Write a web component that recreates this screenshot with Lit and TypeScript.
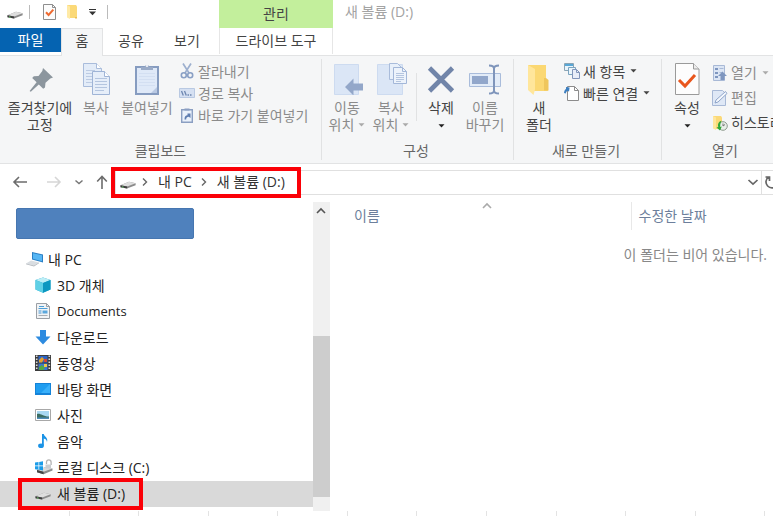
import { LitElement, html, css, svg, nothing } from "lit";
import type { TemplateResult } from "lit";
import { customElement } from "lit/decorators.js";
import { classMap } from "lit/directives/class-map.js";

const icon = (w: number, h: number, body: unknown) =>
  html`<svg width=${w} height=${h} viewBox="0 0 ${w} ${h}" fill="none" aria-hidden="true">${body}</svg>`;

const caret = html`<svg class="caret" width="7" height="4" viewBox="0 0 7 4" aria-hidden="true"><path d="M0.5 0.3h6L3.5 3.6z" fill="currentColor" /></svg>`;

const icons = {
  drive: () => icon(16, 10, svg`
    <path d="M0.5 6.200 9 2.800l6.600 1.400v2L7 9.600 0.500 8.200z" fill="#8b8b8b"/>
    <path d="M0.5 6.200 9 2.800l6.600 1.400L7.200 7.600z" fill="#dedede"/>
    <path d="M0.5 6.200 7.200 7.600v2L0.500 8.300z" fill="#3f3f3f"/>
    <path d="M2 7.900l1.600.3" stroke="#6fd36f"/>`),
  check: () => icon(13, 16, svg`
    <path d="M.5.5h9l3 3v12H.5z" fill="#fcfcfc" stroke="#8e8e8e"/><path d="M9.5.5v3h3" stroke="#8e8e8e"/>
    <path d="M3 8.2l2.6 2.8L10.3 5.6" stroke="#ee6a30" stroke-width="2"/>`),
  folderSmall: () => icon(12, 16, svg`
    <path d="M1 1h9l1 1.5V14H3z" fill="#fbd978"/><path d="M1 1l3 1.5V15L1 13.5z" fill="#ffeaa6"/><path d="M9 13h2v1.5H9z" fill="#e9bf57"/>`),
  customize: () => icon(9, 8, svg`<path d="M1 1.5h7" stroke="#333"/><path d="M1 3.6h7L4.5 7.2z" fill="#333"/>`),
  pin: () => icon(32, 32, svg`
    <path d="M19 5 29 14.500 26.300 15.600 21.500 19.800 21 24.500 19.200 25.800 14.800 21.500 6.800 28.800 5.600 28 12.600 19.300 8.200 15 9.800 13.200 14.500 13 18.300 8z" fill="#8c969e"/>`),
  copy: () => icon(32, 32, svg`
    <path d="M3.500.5h13l5 5v18h-18z" fill="#e3ecf8" stroke="#a9bcdb"/><path d="M16.500.5v5h5" fill="#fff" stroke="#a9bcdb"/>
    <path d="M6 7.500h9M6 10.500h9M6 13.500h9M6 16.500h9M6 19.500h9" stroke="#bccbe3"/>
    <path d="M12.500 8.500h12l5 5v18h-17z" fill="#e6eef9" stroke="#9fb4d6"/><path d="M24.500 8.500v5h5" fill="#fff" stroke="#9fb4d6"/>
    <path d="M15 15.500h12M15 18.500h12M15 21.500h12M15 24.500h12M15 27.500h9" stroke="#b4c5df"/>`),
  paste: () => icon(32, 32, svg`
    <path d="M5 4h22v27H5z" fill="#dfe9f8" stroke="#869cc0" stroke-width="2"/>
    <path d="M8 10.500h16M8 13.500h16M8 16.500h16M8 19.500h16M8 22.500h16" stroke="#d3dff2"/>
    <path d="M10 7V4h3.500a2.600 2.600 0 0 1 5 0H22v3z" fill="#9aabc7"/><circle cx="16" cy="3" r="1" fill="#fff"/><path d="M20 30l6-6v6z" fill="#b9c9e3"/>`),
  cut: () => icon(16, 16, svg`
    <path d="M4 .5 10 10M12 .5 6 10" stroke="#9db0cf" stroke-width="1.700"/>
    <circle cx="4.800" cy="12.300" r="2.500" stroke="#8aa0c5" stroke-width="1.600"/><circle cx="11.200" cy="12.300" r="2.500" stroke="#8aa0c5" stroke-width="1.600"/>`),
  path: () => icon(16, 16, svg`
    <path d="M.5 3.500h15v9H.5z" fill="#d5e0f2" stroke="#b9c9e2"/><path d="M2.500 6l1.800 4.500M5.500 6l1.800 4.500M8.500 10h1.500M11 10h1.500" stroke="#6d86b0" stroke-width="1.300"/>`),
  shortcut: () => icon(16, 16, svg`
    <path d="M2.700 2.700h10.600v12.600H2.700z" fill="#eaf1fb" stroke="#8b9fc2" stroke-width="1.400"/><path d="M5.500 3.500v-2h5v2z" fill="#8b9fc2"/>
    <path d="M5.500 12.500c0-3 1-4 3-4.200V6.500l3 0v4.500L9.800 9.800c-1.800.3-2.600 1-2.600 2.700z" fill="#5f7db0"/>`),
  moveTo: () => icon(32, 32, svg`
    <path d="M3.500 1.500h24v30h-24z" fill="#dbe6f6" stroke="#cddbf0"/><path d="M14 24l8.500-8.500v5H32v7h-9.500v5z" fill="#93a7c9"/>`),
  copyTo: () => icon(32, 32, svg`
    <path d="M2.500 1.500h25v30h-25z" fill="#dbe6f6" stroke="#cddbf0"/>
    <path d="M14.500.5h8l4 4v12h-12z" fill="#e8f0fa" stroke="#a9bcdb"/>
    <path d="M18.500 4.500h9l4 4v12h-13z" fill="#edf3fb" stroke="#a3b7d8"/><path d="M27.500 4.500v4h4" stroke="#a3b7d8"/>
    <path d="M21 10.500h8M21 12.500h8M21 14.500h8M21 16.500h8M21 18.500h5" stroke="#b4c5df"/>`),
  remove: () => icon(32, 32, svg`<path d="M4.500 5 27.500 28M27.500 5 4.500 28" stroke="#7185a9" stroke-width="4.600"/>`),
  rename: () => icon(32, 32, svg`
    <path d="M.5 10.500h31v13H.5z" fill="#e3ecf8" stroke="#a9bcdb"/><path d="M3 13h16v8H3z" fill="#92a7cb"/>
    <path d="M25 5v24M20 2.500c3 0 5 1 5 3 0-2 2-3 5-3M20 30.500c3 0 5-1 5-3 0 2 2 3 5 3" stroke="#7f95bb" stroke-width="2"/>`),
  newFolder: () => icon(32, 32, svg`
    <path d="M5 2h18v24l2 1.500V28H9z" fill="#fbd873"/><path d="M21 15h2l2.500 2v10.500H21z" fill="#efc65c"/>
    <path d="M5 2l7 4v20.500l-1.500 5.500L5 27z" fill="#ffe69b"/>`),
  newItem: () => icon(16, 16, svg`
    <path d="M.5.5h9v7h-9z" fill="#e9f4fb" stroke="#8aa4b5"/><path d="M1 1h8v2H1z" fill="#58a7d6"/>
    <path d="M4.500 4.500h7v7h-7z" fill="#eaf5fb" stroke="#7ba4c0"/>
    <path d="M8.500 6.500h4l3 3v6h-7z" fill="#e7edf8" stroke="#8195ba"/><path d="M12.500 6.500v3h3" stroke="#8195ba"/>`),
  easyAccess: () => icon(16, 16, svg`
    <path d="M3.500 1.500h7l4 4v10h-11z" fill="#fff" stroke="#8c8c8c"/><path d="M10.500 1.500v4h4" stroke="#8c8c8c"/>
    <path d="M0 8c.3-2.500 1-3.600 2-4V2l3.600.6L5 6.800 3.800 5.800C2.600 6.300 2 7 1.800 8.500z" fill="#3c7fc1"/>`),
  properties: () => icon(32, 32, svg`
    <path d="M4.500.5h18l5.500 5.500v25.500H4.500z" fill="#fdfdfd" stroke="#9a9a9a"/><path d="M22.500.5V6H28" fill="#ececec" stroke="#9a9a9a"/>
    <path d="M8 17l6 6L24 12" stroke="#e9561d" stroke-width="3"/>`),
  open: () => icon(16, 16, svg`
    <path d="M1.500.5h11v15h-11z" fill="#dbe5f4" stroke="#a8b9d6"/><path d="M3 3h3v2H3zM3 7h3v2H3zM3 11h3v2H3z" fill="#7e96bf"/>
    <path d="M7.500 3.500h4M7.500 7.500h3" stroke="#a8b9d6"/><path d="M10.500 6.500 15 11h-2.500v4h-4v-4H6z" fill="#7e96bf"/>`),
  edit: () => icon(16, 16, svg`
    <path d="M.5.500h10l3 3v12H.5z" fill="#dfe8f6" stroke="#a8b9d6"/><path d="M3 13l1-3L13.500 1.500 15 3.500 6 12z" fill="#f4f7fc" stroke="#8fa5ca"/>`),
  history: () => icon(16, 16, svg`
    <path d="M1 1h8l1 1.500V14H3z" fill="#fbd978"/><path d="M1 1l3 1.500V15L1 13.500z" fill="#ffe69b"/>
    <circle cx="11" cy="11" r="4.300" fill="#e8eee8" stroke="#8d9a8d"/><path d="M11 8.500V11l2-1.500" stroke="#777"/>
    <path d="M9.500 5.500C6 7 5.500 10 6.500 12L4.500 12.500 8 15.500 9.800 11.500 8.300 12C8 9.500 8.500 8 9.500 5.500z" fill="#2ea836"/>`),
  back: () => icon(16, 16, svg`<path d="M15 8H2M7 3 2 8l5 5" stroke="#6c6c6c" stroke-width="1.600"/>`),
  forward: () => icon(16, 16, svg`<path d="M1 8h13M9 3l5 5-5 5" stroke="#d6d6d6" stroke-width="1.600"/>`),
  up: () => icon(12, 16, svg`<path d="M6 15V3M1.200 7.500 6 2.500l4.800 5" stroke="#6c6c6c" stroke-width="1.600"/>`),
  chevronSmall: () => icon(10, 8, svg`<path d="M1.500 2.500 5 5.500l3.500-3" stroke="#777" stroke-width="1.500"/>`),
  chevronDown: () => icon(12, 8, svg`<path d="M1.500 2 6 6.200 10.500 2" stroke="#666" stroke-width="1.700"/>`),
  chevronUp: () => icon(12, 8, svg`<path d="M2 6l4-4 4 4" stroke="currentColor" stroke-width="1.600"/>`),
  chevronRight: () => icon(6, 10, svg`<path d="M1 1.500 4.500 5 1 8.500" stroke="#666" stroke-width="1.400"/>`),
  refresh: () => icon(16, 16, svg`<path d="M4.500 3A6 6 0 1 0 11 2.700M1.500 3h4v4" stroke="#666" stroke-width="1.700"/>`),
  pc: () => icon(18, 16, svg`
    <path d="M6 1l11 2.500v8L6 8.500z" fill="#2b7fc4"/><path d="M7 2.200l9 2.100v5.900L7 7.700z" fill="#56b6f4"/>
    <path d="M0 12.500l5-3 8 2-5 3z" fill="#d9dde1"/><path d="M0 12.500l8 2 5-3v.8L8 15.500 0 13.300z" fill="#b3b8bd"/>`),
  objects: () => icon(16, 16, svg`
    <path d="M8 0.500l7.500 2.500v9.500L8 15.800.5 12.500V3z" fill="#1fa9cf"/><path d="M8 .5 15.500 3 8 6 .5 3z" fill="#bdeef6"/>
    <path d="M.5 3 8 6v9.800L.5 12.500z" fill="#5fd0e6"/><path d="M8 6l7.500-3v9.500L8 15.800z" fill="#0d97c0"/>`),
  documents: () => icon(16, 16, svg`
    <path d="M1.500.5h10l3 3v12h-13z" fill="#f1f3f5" stroke="#9a9fa5"/><path d="M11.500.5v3h3" stroke="#9a9fa5"/>
    <path d="M4 3.500h5M3.500 5.500h9" stroke="#4c9fd8"/><path d="M3.500 7h3v4h-3z" fill="#9ac4e4"/><path d="M7.500 7.500h5v3h-5z" fill="#5aa7dc"/>
    <path d="M3.500 12.500h9" stroke="#a8adb3"/>`),
  downloads: () => icon(16, 16, svg`<path d="M5 1h6v6.500h4.500L8 15.500.5 7.500H5z" fill="#2d8be0"/>`),
  videos: () => icon(16, 16, svg`
    <path d="M0 0h16v16H0z" fill="#3b3b3b"/><path d="M1.700.5v15M14.300.5v15" stroke="#d9d9d9" stroke-width="1.600" stroke-dasharray="1.500 1.500"/>
    <path d="M3.500 1h9v6.500h-9z" fill="#2c63c4"/><path d="M3.500 8.500h9V15h-9z" fill="#3b74d2"/>
    <path d="M4 5l3-3 2 2-2 3.500H4z" fill="#e2a22f"/><path d="M9 4h3v3H9z" fill="#d34634"/><path d="M4 12l3-2 3 3-2 2H4z" fill="#52a944"/><path d="M9 9h3v3H9z" fill="#efc84a"/>`),
  desktop: () => icon(16, 16, svg`
    <path d="M0 2h16v12H0z" fill="#1583d8"/><path d="M1 3h14v9H1z" fill="#1f9df0"/><path d="M15 3v9H6z" fill="#39b0fa"/>`),
  pictures: () => icon(16, 16, svg`
    <path d="M.5 2.500h15v11H.5z" fill="#fff" stroke="#a8a8a8"/><path d="M2 4h12v8H2z" fill="#a8d8f2"/>
    <path d="M2 7c3-1.500 5 2 12 2.500V12H2z" fill="#3b6d62"/><path d="M2 10.500h12V12H2z" fill="#4e8cb8"/>`),
  music: () => icon(16, 16, svg`
    <path d="M7 1h1.800c.3 2.500 4.700 3.500 3.200 8-.4-2-1.500-3-3.200-3.400V12.500H7z" fill="#1b93e6"/><ellipse cx="6" cy="12.700" rx="2.900" ry="2.300" fill="#1b93e6"/>`),
  localDisk: () => icon(18, 16, svg`
    <path d="M2 11l9-3 6.500 1.500v2L8.500 15.200 2 13.200z" fill="#8b8b8b"/><path d="M2 11l9-3 6.500 1.500-9 3.300z" fill="#dadada"/><path d="M2 11l6.500 1.800v2.400L2 13.300z" fill="#444"/>
    <path d="M0 3.500 3.500 3v3.500H0zM4.200 2.900 8 2.300v4.200H4.200zM0 7.200h3.500v3.500L0 10.200zM4.200 7.200H8v4.200l-3.800-.6z" fill="#1c9ce8"/>
    <path d="M11.500 5V3.200a2.300 2.300 0 0 1 4.600 0V6" stroke="#b4b4b4" stroke-width="1.300"/><path d="M10.500 5.500h5.500v4h-5.500z" fill="#c9cdd1"/>`),
};

type Icon = () => TemplateResult;

interface BigAction { icon: Icon; lines: string[]; off?: boolean; menu?: "inline" | "below"; wide?: string; }
interface SmallAction { icon: Icon; label: string; off?: boolean; menu?: boolean; }

const places: { icon: Icon; label: string; root?: boolean; latin?: boolean; current?: boolean }[] = [
  { icon: icons.pc, label: "내 PC", root: true },
  { icon: icons.objects, label: "3D 개체" },
  { icon: icons.documents, label: "Documents", latin: true },
  { icon: icons.downloads, label: "다운로드" },
  { icon: icons.videos, label: "동영상" },
  { icon: icons.desktop, label: "바탕 화면" },
  { icon: icons.pictures, label: "사진" },
  { icon: icons.music, label: "음악" },
  { icon: icons.localDisk, label: "로컬 디스크 (C:)" },
  { icon: icons.drive, label: "새 볼륨 (D:)", current: true },
];

@customElement("app-root")
export class AppRoot extends LitElement {
  static styles = css`
    :host {
      display: flex;
      flex-direction: column;
      min-height: 100vh;
      overflow: hidden;
      background: #fff;
      color: #444;
      font: 14px/17px "Open Sans", "Noto Sans CJK KR", sans-serif;
      white-space: nowrap;
    }
    *, *::before, *::after { box-sizing: border-box; }
    button {
      border: 0;
      padding: 0;
      margin: 0;
      background: none;
      font: inherit;
      color: inherit;
      text-align: left;
    }
    svg { display: block; flex: none; }

    .header { display: flex; }
    .header-main { flex: none; width: 219px; }
    .quick { display: flex; align-items: center; height: 28px; padding: 0 0 4px 7px; }
    .quick button { margin-right: 10px; }
    .quick .bar { width: 1px; height: 14px; margin-right: 13px; background: #bbb; }
    .quick .app { margin: 4px 6px 0 0; }
    .tabs { display: flex; height: 28px; position: relative; z-index: 1; }
    .tab { width: 56px; height: 26px; padding-bottom: 1px; text-align: center; }
    .tab.file { width: 61px; height: 24px; background: #0563b1; color: #fff; }
    .tab.home {
      width: 42px;
      height: 28px;
      padding-bottom: 4px;
      background: #f5f6f7;
      border: 1px solid #e2e3e4;
      border-bottom: 0;
    }
    .context { flex: none; width: 114px; }
    .context-name { height: 28px; line-height: 28px; text-align: center; background: #c3ef9c; }
    .context .tab { width: 100%; border: solid #e6e6e6; border-width: 0 1px; }
    .title { margin: 0; padding: 3px 12px; font: inherit; color: #a3a3a3; }

    .ribbon {
      display: flex;
      margin-top: -1px;
      height: 109px;
      background: #f5f6f7;
      border: solid #e2e3e4;
      border-width: 1px 0;
      overflow: hidden;
    }
    .group { flex: none; display: flex; flex-direction: column; margin: 3px 0; padding: 0 6px 0 3px; border-right: 1px solid #e1e2e3; }
    .group.clip { width: 322px; padding-left: 6px; }
    .group.organize { width: 192px; }
    .group.create { width: 148px; }
    .group.launch { width: 130px; }
    .actions { flex: 1; display: flex; align-items: flex-start; }
    .caption { height: 18px; text-align: center; color: #666; }
    .big {
      flex: none;
      display: flex;
      flex-direction: column;
      align-items: center;
      width: 44px;
      padding-top: 4px;
      text-align: center;
    }
    .big.pin { width: 68px; }
    .big.paste { width: 58px; }
    .big > svg:first-child { margin-bottom: 4px; }
    .big .line { display: flex; align-items: center; gap: 4px; }
    .big > .caret { margin-top: 8px; color: #222; }
    .off { color: #8b8b8b; }
    .off .caret { color: #aaa; }
    .sep { width: 1px; height: 48px; margin: 14px 2px 0 3px; background: #e1e2e3; }
    .stack { display: flex; flex-direction: column; padding: 1px 0 0 3px; }
    .small { display: flex; align-items: center; gap: 3px; height: 22px; }
    .small .caret { margin-left: 2px; }
    .launch .small { height: 25px; }

    .nav { display: flex; height: 36px; align-items: center; padding-left: 12px; }
    .nav .back { width: 34px; }
    .nav .forward { width: 28px; }
    .nav .recent { width: 22px; }
    .nav .up { width: 19px; }
    .address { flex: 1; display: flex; align-items: center; height: 25px; border: 1px solid #e0e0e0; border-right: 0; }
    .crumbs { position: relative; flex: 1; display: flex; align-items: center; padding: 0 0 1px 4px; color: #333; }
    .crumbs svg { margin-right: 10px; }
    .crumbs svg:first-child { margin: 4px 6px 0 0; }
    .crumbs .crumb { margin-right: 9px; }
    .crumbs .mark { top: -6px; left: -5px; width: 190px; height: 31px; }
    .address .drop { padding-right: 2px; }
    .address .refresh { width: 12px; height: 25px; padding-left: 2px; overflow: hidden; border-left: 1px solid #e0e0e0; }
    .mark { position: absolute; border: 4px solid #fb0007; pointer-events: none; }

    .body { flex: 1; display: flex; padding-top: 2px; }
    .side { width: 313px; flex: none; padding-top: 6px; }
    .block { width: 178px; height: 31px; margin: 0 0 8px 16px; background: #4f81bd; border: 1px solid #4676b0; border-radius: 2px; }
    .places { list-style: none; margin: 0; padding: 0; }
    .place { position: relative; height: 26px; }
    .place a {
      display: flex;
      align-items: center;
      height: 100%;
      padding: 0 0 2px 35px;
      color: #222;
      text-decoration: none;
    }
    .place .slot { width: 22px; }
    .place.root a { padding-left: 26px; }
    .place.latin { font-size: 13px; }
    .place.current { background: #d9d9d9; }
    .place.current .slot { padding-top: 4px; }
    .place .mark { top: -3px; left: 18px; width: 125px; height: 32px; }

    .scroll { flex: none; width: 17px; display: flex; flex-direction: column; background: #f0f0f0; }
    .scroll .arrow { height: 18px; padding: 5px 2px; color: #555; }
    .scroll .before { flex: 116; }
    .scroll .thumb { flex: 161; background: #cdcdcd; }
    .scroll .after { flex: 14; }

    .files { flex: 1; min-width: 0; padding-left: 14px; }
    .columns { width: 100%; border-collapse: collapse; table-layout: fixed; }
    .columns th { height: 28px; padding: 0 0 2px 10px; font-weight: 400; text-align: left; color: #6d7f9c; }
    .columns .name { width: 287px; position: relative; border-right: 1px solid #e8e8e8; }
    .columns .date { padding-left: 7px; }
    .columns .sort { position: absolute; top: 0; left: 0; right: 0; display: flex; justify-content: center; color: #aaa; }
    .empty { margin: 16px 0 0; padding-right: 6px; text-align: right; color: #888; }

    .ticks { display: flex; height: 5px; }
    .ticks span { width: 9%; border-right: 1px solid #e3e3e3; }
  `;

  private big(a: BigAction) {
    const last = a.lines.length - 1;
    return html`<button class=${classMap({ big: true, off: !!a.off, [a.wide ?? "std"]: true })}>
      ${a.icon()}
      ${a.lines.map((t, i) => html`<span class="line">${t}${a.menu === "inline" && i === last ? caret : nothing}</span>`)}
      ${a.menu === "below" ? caret : nothing}
    </button>`;
  }

  private small(a: SmallAction) {
    return html`<button class=${classMap({ small: true, off: !!a.off })}>${a.icon()}<span>${a.label}</span>${a.menu ? caret : nothing}</button>`;
  }

  private ribbon() {
    return html`<section class="ribbon">
      <div class="group clip">
        <div class="actions">
          ${this.big({ icon: icons.pin, lines: ["즐겨찾기에", "고정"], wide: "pin" })}
          ${this.big({ icon: icons.copy, lines: ["복사"], off: true })}
          ${this.big({ icon: icons.paste, lines: ["붙여넣기"], off: true, wide: "paste" })}
          <div class="stack">
            ${this.small({ icon: icons.cut, label: "잘라내기", off: true })}
            ${this.small({ icon: icons.path, label: "경로 복사", off: true })}
            ${this.small({ icon: icons.shortcut, label: "바로 가기 붙여넣기", off: true })}
          </div>
        </div>
        <div class="caption">클립보드</div>
      </div>
      <div class="group organize">
        <div class="actions">
          ${this.big({ icon: icons.moveTo, lines: ["이동", "위치"], off: true, menu: "inline" })}
          ${this.big({ icon: icons.copyTo, lines: ["복사", "위치"], off: true, menu: "inline" })}
          <span class="sep"></span>
          ${this.big({ icon: icons.remove, lines: ["삭제"], menu: "below" })}
          ${this.big({ icon: icons.rename, lines: ["이름", "바꾸기"], off: true })}
        </div>
        <div class="caption">구성</div>
      </div>
      <div class="group create">
        <div class="actions">
          ${this.big({ icon: icons.newFolder, lines: ["새", "폴더"] })}
          <div class="stack">
            ${this.small({ icon: icons.newItem, label: "새 항목", menu: true })}
            ${this.small({ icon: icons.easyAccess, label: "빠른 연결", menu: true })}
          </div>
        </div>
        <div class="caption">새로 만들기</div>
      </div>
      <div class="group launch">
        <div class="actions">
          ${this.big({ icon: icons.properties, lines: ["속성"], menu: "below" })}
          <div class="stack">
            ${this.small({ icon: icons.open, label: "열기", off: true, menu: true })}
            ${this.small({ icon: icons.edit, label: "편집", off: true })}
            ${this.small({ icon: icons.history, label: "히스토리" })}
          </div>
        </div>
        <div class="caption">열기</div>
      </div>
    </section>`;
  }

  render() {
    return html`
      <header class="header">
        <div class="header-main">
          <div class="quick">
            <span class="app">${icons.drive()}</span><span class="bar"></span>
            <button aria-label="속성">${icons.check()}</button>
            <button aria-label="새 폴더">${icons.folderSmall()}</button>
            <button aria-label="사용자 지정">${icons.customize()}</button>
            <span class="bar"></span>
          </div>
          <nav class="tabs">
            <button class="tab file">파일</button>
            <button class="tab home">홈</button>
            <button class="tab">공유</button>
            <button class="tab">보기</button>
          </nav>
        </div>
        <div class="context">
          <div class="context-name">관리</div>
          <button class="tab">드라이브 도구</button>
        </div>
        <h1 class="title">새 볼륨 (D:)</h1>
      </header>
      ${this.ribbon()}
      <nav class="nav">
        <button class="back" aria-label="뒤로">${icons.back()}</button>
        <button class="forward" aria-label="앞으로">${icons.forward()}</button>
        <button class="recent" aria-label="최근 위치">${icons.chevronSmall()}</button>
        <button class="up" aria-label="위로">${icons.up()}</button>
        <div class="address">
          <div class="crumbs">
            ${icons.drive()}${icons.chevronRight()}
            <button class="crumb">내 PC</button>${icons.chevronRight()}
            <button class="crumb">새 볼륨 (D:)</button>
            <span class="mark"></span>
          </div>
          <button class="drop" aria-label="이전 위치">${icons.chevronDown()}</button>
          <button class="refresh" aria-label="새로 고침">${icons.refresh()}</button>
        </div>
      </nav>
      <main class="body">
        <aside class="side">
          <div class="block"></div>
          <ul class="places">
            ${places.map((p) => html`<li class=${classMap({ place: true, root: !!p.root, latin: !!p.latin, current: !!p.current })}>
              <a href="#"><span class="slot">${p.icon()}</span>${p.label}</a>
              ${p.current ? html`<span class="mark"></span>` : nothing}
            </li>`)}
          </ul>
        </aside>
        <div class="scroll">
          <button class="arrow" aria-label="위로 스크롤">${icons.chevronUp()}</button>
          <span class="before"></span><span class="thumb"></span><span class="after"></span>
        </div>
        <section class="files">
          <table class="columns">
            <thead><tr>
              <th class="name">이름<span class="sort">${icons.chevronUp()}</span></th>
              <th class="date">수정한 날짜</th>
            </tr></thead>
          </table>
          <p class="empty">이 폴더는 비어 있습니다.</p>
        </section>
      </main>
      <div class="ticks">${Array.from({ length: 11 }, () => html`<span></span>`)}</div>
    `;
  }
}
